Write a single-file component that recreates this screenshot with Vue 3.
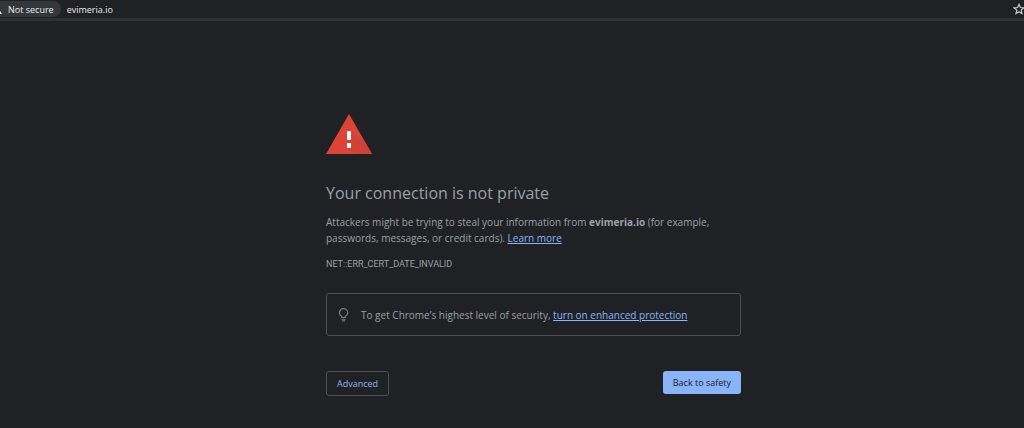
<script setup>
const host = 'evimeria.io'
</script>

<template>
  <div class="browser">
    <header class="toolbar">
      <button class="security" type="button">
        <svg class="warn" width="12" height="10" viewBox="0 0 12 10" aria-hidden="true">
          <path d="M6 0 12 10H0z" fill="#e8eaed" />
          <path d="M5.4 3.5h1.2v3H5.4zM5.4 7.4h1.2v1.2H5.4z" fill="#35363a" />
        </svg>
        <span>Not secure</span>
      </button>
      <span class="host">{{ host }}</span>
      <button class="star" type="button" aria-label="Bookmark this page">
        <svg width="12" height="12" viewBox="0 0 12 12" aria-hidden="true">
          <path d="M6 1.3 7.4 4.5 10.9 4.8 8.2 7.1 9 10.5 6 8.7 3 10.5 3.8 7.1 1.1 4.8 4.6 4.5z" fill="none" stroke="#c8cacd" stroke-width="1.2" />
        </svg>
      </button>
    </header>

    <main class="warning">
      <svg class="triangle" width="46" height="40" viewBox="0 0 46 40" aria-hidden="true">
        <path d="M23 0 46 40H0z" fill="#db4437" />
        <path d="M25 17 39 28 46 40H29L21 34h4v-4l-4-4h4z" fill="#d24136" />
        <path d="M21 17h4v9h-4zM21 29h4v5h-4z" fill="#fff" />
      </svg>
      <h1>Your connection is not private</h1>
      <p class="detail">
        <span>Attackers might be trying to steal your information from </span><strong>{{ host }}</strong><span> (for example,</span><br>
        <span>passwords, messages, or credit cards). </span><a href="#learn">Learn more</a>
      </p>
      <p class="code">NET::ERR_CERT_DATE_INVALID</p>
      <div class="tip">
        <svg width="11" height="14" viewBox="0 0 11 14" aria-hidden="true">
          <path d="M3.7 9.6V8.3C2.2 7.5 1.3 6.3 1.3 4.9a4.2 4.2 0 0 1 8.4 0C9.7 6.3 8.8 7.5 7.3 8.3v1.3z" fill="none" stroke="#74777b" stroke-width="1.3" />
          <path d="M3.5 11.2h4v1h-4zM4 12.5h3v1H4z" fill="#74777b" />
        </svg>
        <p>To get Chrome’s highest level of security, <a href="#protection">turn on enhanced protection</a></p>
      </div>
      <div class="actions">
        <button class="advanced" type="button">Advanced</button>
        <button class="safety" type="button">Back to safety</button>
      </div>
    </main>
  </div>
</template>

<style>
body {
  background: #202124;
}
</style>

<style scoped>
.browser {
  box-sizing: border-box;
  min-height: 100vh;
  background: #202124;
  color: #9aa0a6;
  font-family: "Open Sans", "Noto Sans", sans-serif;
  font-size: 10px;
  border-bottom: 1px solid #171719;
}

button {
  font: inherit;
  margin: 0;
  cursor: pointer;
}

.toolbar {
  display: flex;
  align-items: center;
  height: 18px;
  overflow: hidden;
  border-bottom: 3px solid #303134;
  color: #e8eaed;
  font-size: 9px;
}

.security {
  display: flex;
  align-items: center;
  gap: 6px;
  height: 16px;
  margin-left: -10px;
  padding: 0 7px 0 0;
  border: 0;
  border-radius: 0 8px 8px 0;
  background: #35363a;
  color: #e8eaed;
}

.warn {
  flex: none;
}

.host {
  margin-left: 6px;
}

.star {
  display: flex;
  margin-left: auto;
  margin-right: -1px;
  padding: 0;
  border: 0;
  background: none;
}

.warning {
  max-width: 415px;
  margin: 0 auto;
  padding: 93px 0 32px 43px;
}

.triangle {
  display: block;
}

h1 {
  margin: 28px 0 10px;
  font-size: 16px;
  font-weight: 400;
  line-height: 22px;
}

p {
  margin: 0;
}

.detail {
  line-height: 16px;
}

a {
  color: #8ab4f8;
}

.code {
  margin-top: 12px;
  font-family: Roboto, "Open Sans", sans-serif;
  font-size: 9px;
  line-height: 12px;
}

.tip {
  display: flex;
  align-items: center;
  gap: 12px;
  box-sizing: border-box;
  min-height: 43px;
  margin-top: 23px;
  padding: 0 11px;
  border: 1px solid #4c4f53;
  border-radius: 3px;
}

.actions {
  display: flex;
  justify-content: space-between;
  align-items: flex-start;
  margin-top: 35px;
}

.actions button {
  box-sizing: border-box;
  padding: 0 10px;
  border-radius: 3px;
  font-size: 9px;
}

.advanced {
  height: 25px;
  border: 1px solid #4c4f53;
  background: transparent;
  color: #8ab4f8;
}

.safety {
  height: 23px;
  border: 0;
  background: #8ab4f8;
  color: #202124;
}
</style>
